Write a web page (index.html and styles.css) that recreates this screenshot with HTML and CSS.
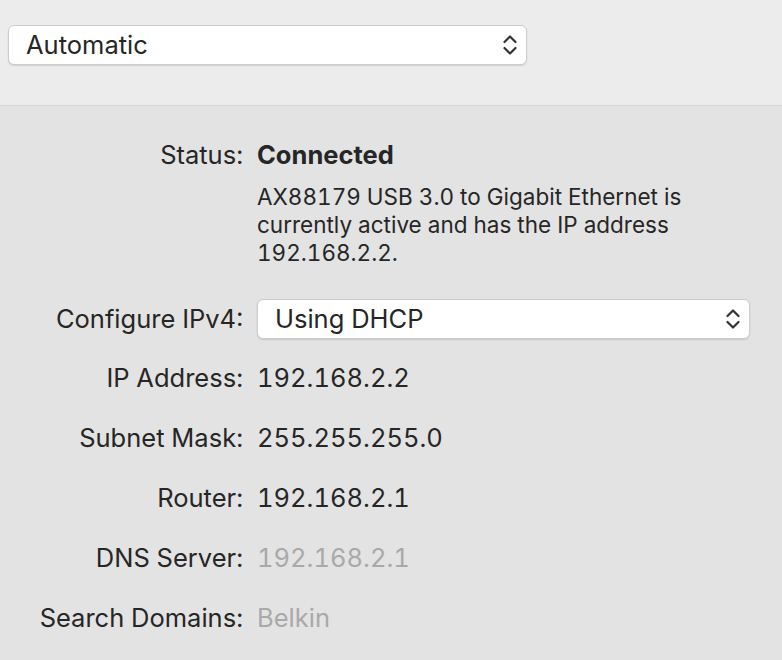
FILE: index.html
```html
<!DOCTYPE html>
<html>
<head>
<meta charset="utf-8">
<link rel="stylesheet" href="styles.css">
</head>
<body>
<div class="top">
  <div class="select select-main">
    <span class="select-text">Automatic</span>
    <svg class="chev" width="16" height="24" viewBox="0 0 16 24"><path d="M2.5 9 L8 3.5 L13.5 9" fill="none" stroke="#333" stroke-width="2.2" stroke-linecap="round" stroke-linejoin="round"/><path d="M2.5 15 L8 20.5 L13.5 15" fill="none" stroke="#333" stroke-width="2.2" stroke-linecap="round" stroke-linejoin="round"/></svg>
  </div>
</div>
<div class="form">
  <div class="row row-status">
    <div class="label">Status:</div>
    <div class="value bold">Connected</div>
  </div>
  <div class="row row-desc">
    <div class="label"></div>
    <div class="desc">AX88179 USB 3.0 to Gigabit Ethernet is<br>currently active and has the IP address<br>192.168.2.2.</div>
  </div>
  <div class="row row-config">
    <div class="label">Configure IPv4:</div>
    <div class="select select-config">
      <span class="select-text">Using DHCP</span>
      <svg class="chev" width="16" height="24" viewBox="0 0 16 24"><path d="M2.5 9 L8 3.5 L13.5 9" fill="none" stroke="#333" stroke-width="2.2" stroke-linecap="round" stroke-linejoin="round"/><path d="M2.5 15 L8 20.5 L13.5 15" fill="none" stroke="#333" stroke-width="2.2" stroke-linecap="round" stroke-linejoin="round"/></svg>
    </div>
  </div>
  <div class="row row-first">
    <div class="label">IP Address:</div>
    <div class="value">192.168.2.2</div>
  </div>
  <div class="row row-next">
    <div class="label">Subnet Mask:</div>
    <div class="value">255.255.255.0</div>
  </div>
  <div class="row row-next">
    <div class="label">Router:</div>
    <div class="value">192.168.2.1</div>
  </div>
  <div class="row row-next">
    <div class="label">DNS Server:</div>
    <div class="value dim">192.168.2.1</div>
  </div>
  <div class="row row-next">
    <div class="label">Search Domains:</div>
    <div class="value dim">Belkin</div>
  </div>
</div>
</body>
</html>
```
FILE: styles.css
```css
html, body {
  margin: 0;
  padding: 0;
}
body {
  width: 782px;
  height: 660px;
  overflow: hidden;
  background: #e3e3e3;
  font-family: Inter, "Liberation Sans", sans-serif;
  font-variant-numeric: tabular-nums;
  color: #262626;
}
.top {
  background: #ececec;
  height: 106px;
  border-bottom: 1px solid #d5d5d5;
  padding: 25px 0 0 8px;
  box-sizing: border-box;
}
.select {
  box-sizing: border-box;
  height: 40px;
  background: #fff;
  border: 1px solid #cdcdcd;
  border-radius: 6px;
  box-shadow: 0 1px 1.5px rgba(0, 0, 0, 0.12);
  display: flex;
  align-items: center;
  justify-content: space-between;
  padding: 0 8px 0 17px;
}
.select-main {
  width: 519px;
}
.select-config {
  width: 493px;
}
.select-text {
  font-size: 25.5px;
  line-height: 30px;
  color: #262626;
}
.chev {
  display: block;
}
.form {
  padding-top: 35px;
}
.row {
  display: grid;
  grid-template-columns: 243px 1fr;
  column-gap: 14px;
  align-items: center;
}
.label {
  text-align: right;
  font-size: 25.5px;
  line-height: 28px;
}
.value {
  font-size: 25.5px;
  line-height: 28px;
}
.bold {
  font-weight: 700;
}
.dim {
  color: #a9a9a9;
}
.row-desc {
  margin-top: 14px;
}
.desc {
  font-size: 22.5px;
  line-height: 28px;
}
.row-config {
  margin-top: 32px;
}
.row-first {
  margin-top: 25px;
}
.row-next {
  margin-top: 32px;
}
```
